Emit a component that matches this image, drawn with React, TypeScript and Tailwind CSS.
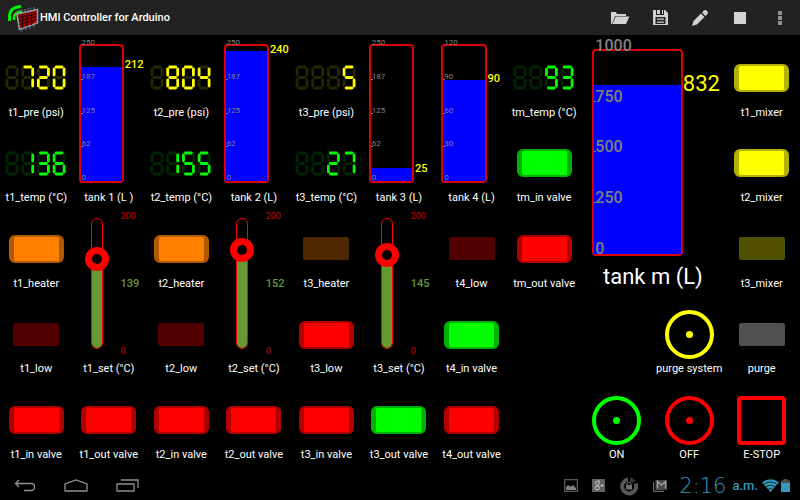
import { useState, type ReactNode } from 'react'
import clsx from 'clsx'

// segment order: a b c d e f g
const SEGMENTS: [number, number, number, number][] = [
  [4, 2, 10, 2],
  [12, 4, 12, 10],
  [12, 15, 12, 21],
  [4, 23, 10, 23],
  [2, 15, 2, 21],
  [2, 4, 2, 10],
  [4, 12.5, 10, 12.5],
]

const DIGITS: Record<string, string> = {
  ' ': '0000000',
  '0': '1111110',
  '1': '0110000',
  '2': '1101101',
  '3': '1111001',
  '4': '0110011',
  '5': '1011011',
  '6': '1011111',
  '7': '1110000',
  '8': '1111111',
  '9': '1111011',
}

function Cell({ place, label, children }: { place: string; label: string; children: ReactNode }) {
  return (
    <div className={clsx('flex min-w-0 flex-col items-center', place)}>
      <div className="flex flex-1 items-center pt-4">{children}</div>
      <span className="h-4 text-[11px] leading-4 whitespace-nowrap">{label}</span>
    </div>
  )
}

function Display({ place, label, value, color }: { place: string; label: string; value: number; color: 'yellow' | 'green' }) {
  const chars = String(value).padStart(4, ' ').split('')
  const on = color === 'yellow' ? '#ffff00' : '#00ff00'
  const off = color === 'yellow' ? '#262600' : '#002600'
  return (
    <Cell place={place} label={label}>
      <svg role="img" aria-label={String(value)} width="62" height="25" viewBox="0 0 62 25" strokeWidth="2.8" strokeLinecap="round">
        {chars.map((c, i) =>
          SEGMENTS.map(([x1, y1, x2, y2], s) => (
            <line
              key={`${i}-${s}`}
              x1={x1 + i * 15.7}
              y1={y1}
              x2={x2 + i * 15.7}
              y2={y2}
              stroke={DIGITS[c][s] === '1' ? on : off}
            />
          )),
        )}
      </svg>
    </Cell>
  )
}

const LAMP_ON = {
  red: 'bg-[#ff0000] border-[#b20000]',
  green: 'bg-[#00ff00] border-[#00b200]',
  yellow: 'bg-[#ffff00] border-[#b2b200]',
  orange: 'bg-[#ff8000] border-[#b25900]',
  gray: 'bg-[#ffffff] border-[#b2b2b2]',
}

const LAMP_OFF = {
  red: 'bg-[#500000]',
  green: 'bg-[#005000]',
  yellow: 'bg-[#505000]',
  orange: 'bg-[#502800]',
  gray: 'bg-[#505050]',
}

function Lamp({ place, label, color, on }: { place: string; label: string; color: keyof typeof LAMP_ON; on: boolean }) {
  return (
    <Cell place={place} label={label}>
      <div
        role="img"
        aria-label={on ? 'on' : 'off'}
        className={
          on
            ? clsx('h-7 w-[55px] rounded-md border-x-[5px] border-y-2', LAMP_ON[color])
            : clsx('h-[23px] w-[46px] rounded-xs', LAMP_OFF[color])
        }
      />
    </Cell>
  )
}

interface TankProps {
  place: string
  label: string
  value: number
  max: number
  large?: boolean
}

function Tank({ place, label, value, max, large }: TankProps) {
  const level = (value / max) * 100
  return (
    <div className={clsx('flex min-w-0 flex-col', place)}>
      <div className={clsx('flex flex-1', large ? 'pt-3.5 pb-1.5 pl-3' : 'pt-[9px] pb-[7px] pl-1.5')}>
        <div
          role="meter"
          aria-label={label}
          aria-valuenow={value}
          aria-valuemax={max}
          className="relative flex w-[68%] flex-col justify-end rounded-sm border-2 border-[#dd0000]"
        >
          <div className="bg-[#0000ff]" style={{ height: `${level}%` }} />
          {[1, 2, 3].map((q) => (
            <i key={q} className="absolute left-0 h-px w-0.5 bg-[#808080]" style={{ bottom: `${q * 25}%` }} />
          ))}
          {[0, 1, 2, 3, 4].map((q) => (
            <span
              key={q}
              className={clsx(
                'absolute left-px text-[#808080]',
                large ? 'text-base leading-[10px] font-medium' : 'text-[8px] leading-[6px]',
              )}
              style={{ bottom: `${q * 25}%` }}
            >
              {Math.floor((max * q) / 4)}
            </span>
          ))}
        </div>
        <div className="w-0">
          <div style={{ height: `${100 - level}%` }} />
          <span
            className={clsx(
              'block -translate-y-1/2 text-[#ffff00]',
              large ? 'text-[22px] leading-6' : 'pl-px text-[11px] leading-3 font-medium',
            )}
          >
            {value}
          </span>
        </div>
      </div>
      <span
        className={clsx(
          'text-center whitespace-nowrap',
          large ? 'h-[30px] text-[22px] leading-[30px]' : 'h-4 text-[11px] leading-4',
        )}
      >
        {label}
      </span>
    </div>
  )
}

function Setpoint({ place, id, label, initial }: { place: string; id: string; label: string; initial: number }) {
  const [value, setValue] = useState(initial)
  return (
    <div className={clsx('flex min-w-0 flex-col', place)}>
      <div className="flex flex-1 gap-[18px] pt-3 pb-3 pl-[18px]">
        <div className="relative flex w-3 flex-col justify-end rounded-md border border-[#ff0000]">
          <div className="rounded-b-md bg-[#669933]" style={{ height: `${value / 2}%` }} />
          <input
            id={id}
            type="range"
            min={0}
            max={200}
            value={value}
            onChange={(e) => setValue(Number(e.target.value))}
            className="absolute -top-3 -left-[7px] h-[calc(100%+24px)] w-6 appearance-none bg-transparent [direction:rtl] [writing-mode:vertical-lr] [&::-webkit-slider-thumb]:size-6 [&::-webkit-slider-thumb]:appearance-none [&::-webkit-slider-thumb]:rounded-full [&::-webkit-slider-thumb]:border-[7px] [&::-webkit-slider-thumb]:border-[#ff0000] [&::-webkit-slider-thumb]:bg-black"
          />
        </div>
        <div className="-my-2 flex flex-col justify-between text-[9px] leading-3 text-[#cc0000]">
          <span>200</span>
          <output htmlFor={id} className="text-[11px] font-medium text-[#669933]">
            {value}
          </output>
          <span>0</span>
        </div>
      </div>
      <label htmlFor={id} className="h-4 text-center text-[11px] leading-4 whitespace-nowrap">
        {label}
      </label>
    </div>
  )
}

const RING = {
  green: 'border-[#00ff00] text-[#00ff00]',
  red: 'border-[#ff0000] text-[#ff0000]',
  yellow: 'border-[#ffff00] text-[#ffff00]',
}

function PushButton({ place, label, color, square }: { place: string; label: string; color: keyof typeof RING; square?: boolean }) {
  return (
    <Cell place={place} label={label}>
      <button
        type="button"
        aria-label={label}
        className={clsx(
          'flex size-[49px] items-center justify-center border-4',
          square ? 'rounded-sm' : 'rounded-full',
          RING[color],
        )}
      >
        {!square && <span className="size-[7px] rounded-full bg-current" />}
      </button>
    </Cell>
  )
}

function AppIcon() {
  return (
    <svg width="32" height="28" viewBox="0 0 32 28" fill="none" aria-hidden="true">
      <path d="M1.500 17V12Q2 3 13 2.500" stroke="#00ee00" strokeWidth="3" />
      <path d="M6 16V13Q6.500 8 14 7.500" stroke="#00ee00" strokeWidth="2.600" />
      <path d="M11 8V6M14 7.500v-2M17 7V5M20 6.300v-2M23 5.600v-2M26 5V3M14 25.500v2M18 24.200v2M22 23v2M26 21.500v2" stroke="#6f8286" />
      <path d="M9 10 29.500 5.500V19L11.500 25.500Z" fill="#9a0000" stroke="#86a0a6" strokeWidth="1.600" />
      <path d="M10.500 13.500 28.500 9.500M11 17l17.500-4.500M11.500 20.500l17-5M14.500 10v14M19 9v13.500M23.500 8v13" stroke="#180000" strokeWidth=".9" />
    </svg>
  )
}

function FolderIcon() {
  return (
    <svg width="20" height="14" viewBox="0 0 20 14" fill="#d2d2d2" aria-hidden="true">
      <path d="M1 13V1h5l1 2h9v2H5L2 13Z" />
      <path d="M5.500 5.500H19.500L16 13H2.500Z" />
    </svg>
  )
}

function SaveIcon() {
  return (
    <svg width="15" height="15" viewBox="0 0 15 15" aria-hidden="true">
      <path fill="#d2d2d2" fillRule="evenodd" d="M0 0h3v5h8V0h1l3 3v12H0ZM2.500 7v7h10V7Z" />
      <path fill="#d2d2d2" d="M4 0h3v4H4ZM9 0h1v4H9ZM4 8.500h7v1.300H4ZM4 11.500h7v1.300H4Z" />
    </svg>
  )
}

function PencilIcon() {
  return (
    <svg width="16" height="16" viewBox="0 0 16 16" fill="#d2d2d2" aria-hidden="true">
      <path d="M0 16 1.500 11 9 3.500l3.500 3.500L5 14.500Z" />
      <path d="M10 2.500 12 .5q1.500-1 3 .5t.500 3L13.500 6Z" />
    </svg>
  )
}

function StopIcon() {
  return (
    <svg width="12" height="12" aria-hidden="true">
      <rect width="12" height="12" fill="#d2d2d2" />
    </svg>
  )
}

function MoreIcon() {
  return (
    <svg width="4" height="14" viewBox="0 0 4 14" fill="#909090" aria-hidden="true">
      <path d="M0 0h4v4H0ZM0 5h4v4H0ZM0 10h4v4H0Z" />
    </svg>
  )
}

const ACTIONS = [
  { label: 'Open', icon: <FolderIcon /> },
  { label: 'Save', icon: <SaveIcon /> },
  { label: 'Edit', icon: <PencilIcon /> },
  { label: 'Stop', icon: <StopIcon /> },
  { label: 'More options', icon: <MoreIcon /> },
]

function TopBar() {
  return (
    <header className="flex h-[35px] items-center bg-[#222222] pl-2">
      <AppIcon />
      <h1 className="flex-1 pt-0.5 text-[11px] font-medium whitespace-nowrap">HMI Controller for Arduino</h1>
      {ACTIONS.map((a) => (
        <button key={a.label} type="button" aria-label={a.label} className="flex h-full w-10 items-center justify-center">
          {a.icon}
        </button>
      ))}
    </header>
  )
}

function SystemBar() {
  return (
    <footer className="flex h-[29px] items-center justify-between pr-2.5 pl-3.5">
      <nav className="flex items-center gap-7">
        <button type="button" aria-label="Back">
          <svg width="22" height="13" viewBox="0 0 22 13" fill="none" stroke="#909090" strokeWidth="1.300">
            <path d="M5 1 1.500 4.500 5 8M1.500 4.500H17q3.500 0 3.500 3.500T17 11.500H10" />
          </svg>
        </button>
        <button type="button" aria-label="Home">
          <svg width="24" height="13" viewBox="0 0 24 13" fill="none" stroke="#909090" strokeWidth="1.300">
            <path d="M1 12V5L12 1l11 4v7Z" />
          </svg>
        </button>
        <button type="button" aria-label="Recent apps">
          <svg width="23" height="13" viewBox="0 0 23 13" fill="none" stroke="#909090" strokeWidth="1.300">
            <path d="M1 5h17v7H1ZM5 1h17v8" />
          </svg>
        </button>
      </nav>
      <div className="flex items-center text-[#3399bb]">
        <div className="mr-3 flex items-center gap-3.5">
          <svg width="14" height="13" viewBox="0 0 14 13" aria-hidden="true">
            <rect x=".7" y=".7" width="12.600" height="11.600" fill="none" stroke="#606060" strokeWidth="1.200" />
            <path d="M2 11V8l2-2 2 1.500L8 7l1-1 3 3v2Z" fill="#808080" />
          </svg>
          <svg width="13" height="13" viewBox="0 0 13 13" aria-hidden="true">
            <rect width="13" height="13" fill="#606060" />
            <ellipse cx="5.500" cy="4.200" rx="1.800" ry="2" fill="none" stroke="#c8c8c8" />
            <ellipse cx="5.200" cy="9" rx="2.300" ry="1.800" fill="none" stroke="#c8c8c8" />
            <path d="M6 2h2M5.500 6l1.500 1.500M8.500 6.500h3M10 5v3" stroke="#c8c8c8" />
          </svg>
          <svg width="20" height="20" viewBox="0 0 20 20" fill="none" aria-hidden="true">
            <path d="M9 3.500a7 7 0 1 0 7.500 4" stroke="#585458" strokeWidth="4" />
            <path d="M11 3.500q2.500.5 4 2.500" stroke="#383438" strokeWidth="4" />
            <path d="M7 9h6v4.500H7Z" fill="#707070" />
            <path d="M8 9V7.500q2-2.500 4 0V9" stroke="#707070" />
          </svg>
          <svg width="14" height="12" viewBox="0 0 14 12" fill="none" aria-hidden="true">
            <path d="M.700 2v9.300H11" stroke="#808080" />
            <rect x="2.500" y="0" width="11.500" height="10" fill="#484848" />
            <path d="M4.500 8.500v-7L8.500 5l4-3.500v7" stroke="#a0a0a0" strokeWidth="1.400" />
          </svg>
        </div>
        <time className="font-['DejaVu_Sans',sans-serif] text-[21px] leading-6 font-extralight">2:16</time>
        <span className="ml-1.5 text-[13px] font-medium">a.m.</span>
        <svg className="ml-1" width="17" height="13" viewBox="0 0 17 13" aria-hidden="true">
          <path d="M0 3.500Q8.500-3 17 3.500L8.500 13Z" fill="currentColor" />
          <path d="M1.500 5.500q7-5 14 0M3.500 8q5-3.500 10 0M6 10.500q2.500-2 5 0" fill="none" stroke="#000" strokeWidth=".7" />
        </svg>
        <svg className="ml-0.5" width="9" height="13" viewBox="0 0 9 13" aria-hidden="true">
          <path d="M2.500 0h4v1.500H9V4H0V1.500h2.500Z" fill="#505050" />
          <path d="M0 4h9v9H0Z" fill="currentColor" />
        </svg>
      </div>
    </footer>
  )
}

export default function App() {
  return (
    <div className="flex min-h-screen flex-col bg-black font-[Roboto,sans-serif] text-white">
      <TopBar />
      <main className="grid flex-1 grid-cols-11 grid-rows-5 pr-0.5 pb-2">
        <Display place="col-start-1 row-start-1" label="t1_pre (psi)" value={720} color="yellow" />
        <Display place="col-start-1 row-start-2" label="t1_temp (°C)" value={136} color="green" />
        <Lamp place="col-start-1 row-start-3" label="t1_heater" color="orange" on />
        <Lamp place="col-start-1 row-start-4" label="t1_low" color="red" on={false} />
        <Tank place="col-start-2 row-start-1 row-span-2" label="tank 1 (L )" value={212} max={250} />
        <Setpoint place="col-start-2 row-start-3 row-span-2" id="t1_set" label="t1_set (°C)" initial={139} />

        <Display place="col-start-3 row-start-1" label="t2_pre (psi)" value={804} color="yellow" />
        <Display place="col-start-3 row-start-2" label="t2_temp (°C)" value={155} color="green" />
        <Lamp place="col-start-3 row-start-3" label="t2_heater" color="orange" on />
        <Lamp place="col-start-3 row-start-4" label="t2_low" color="red" on={false} />
        <Tank place="col-start-4 row-start-1 row-span-2" label="tank 2 (L)" value={240} max={250} />
        <Setpoint place="col-start-4 row-start-3 row-span-2" id="t2_set" label="t2_set (°C)" initial={152} />

        <Display place="col-start-5 row-start-1" label="t3_pre (psi)" value={5} color="yellow" />
        <Display place="col-start-5 row-start-2" label="t3_temp (°C)" value={27} color="green" />
        <Lamp place="col-start-5 row-start-3" label="t3_heater" color="orange" on={false} />
        <Lamp place="col-start-5 row-start-4" label="t3_low" color="red" on />
        <Tank place="col-start-6 row-start-1 row-span-2" label="tank 3 (L)" value={25} max={250} />
        <Setpoint place="col-start-6 row-start-3 row-span-2" id="t3_set" label="t3_set (°C)" initial={145} />

        <Tank place="col-start-7 row-start-1 row-span-2" label="tank 4 (L)" value={90} max={120} />
        <Lamp place="col-start-7 row-start-3" label="t4_low" color="red" on={false} />
        <Lamp place="col-start-7 row-start-4" label="t4_in valve" color="green" on />

        <Display place="col-start-8 row-start-1" label="tm_temp (°C)" value={93} color="green" />
        <Lamp place="col-start-8 row-start-2" label="tm_in valve" color="green" on />
        <Lamp place="col-start-8 row-start-3" label="tm_out valve" color="red" on />

        <Tank place="col-start-9 col-span-2 row-start-1 row-span-3" label="tank m (L)" value={832} max={1000} large />
        <PushButton place="col-start-10 row-start-4" label="purge system" color="yellow" />

        <Lamp place="col-start-11 row-start-1" label="t1_mixer" color="yellow" on />
        <Lamp place="col-start-11 row-start-2" label="t2_mixer" color="yellow" on />
        <Lamp place="col-start-11 row-start-3" label="t3_mixer" color="yellow" on={false} />
        <Lamp place="col-start-11 row-start-4" label="purge" color="gray" on={false} />

        <Lamp place="col-start-1 row-start-5" label="t1_in valve" color="red" on />
        <Lamp place="col-start-2 row-start-5" label="t1_out valve" color="red" on />
        <Lamp place="col-start-3 row-start-5" label="t2_in valve" color="red" on />
        <Lamp place="col-start-4 row-start-5" label="t2_out valve" color="red" on />
        <Lamp place="col-start-5 row-start-5" label="t3_in valve" color="red" on />
        <Lamp place="col-start-6 row-start-5" label="t3_out valve" color="green" on />
        <Lamp place="col-start-7 row-start-5" label="t4_out valve" color="red" on />
        <PushButton place="col-start-9 row-start-5" label="ON" color="green" />
        <PushButton place="col-start-10 row-start-5" label="OFF" color="red" />
        <PushButton place="col-start-11 row-start-5" label="E-STOP" color="red" square />
      </main>
      <SystemBar />
    </div>
  )
}
